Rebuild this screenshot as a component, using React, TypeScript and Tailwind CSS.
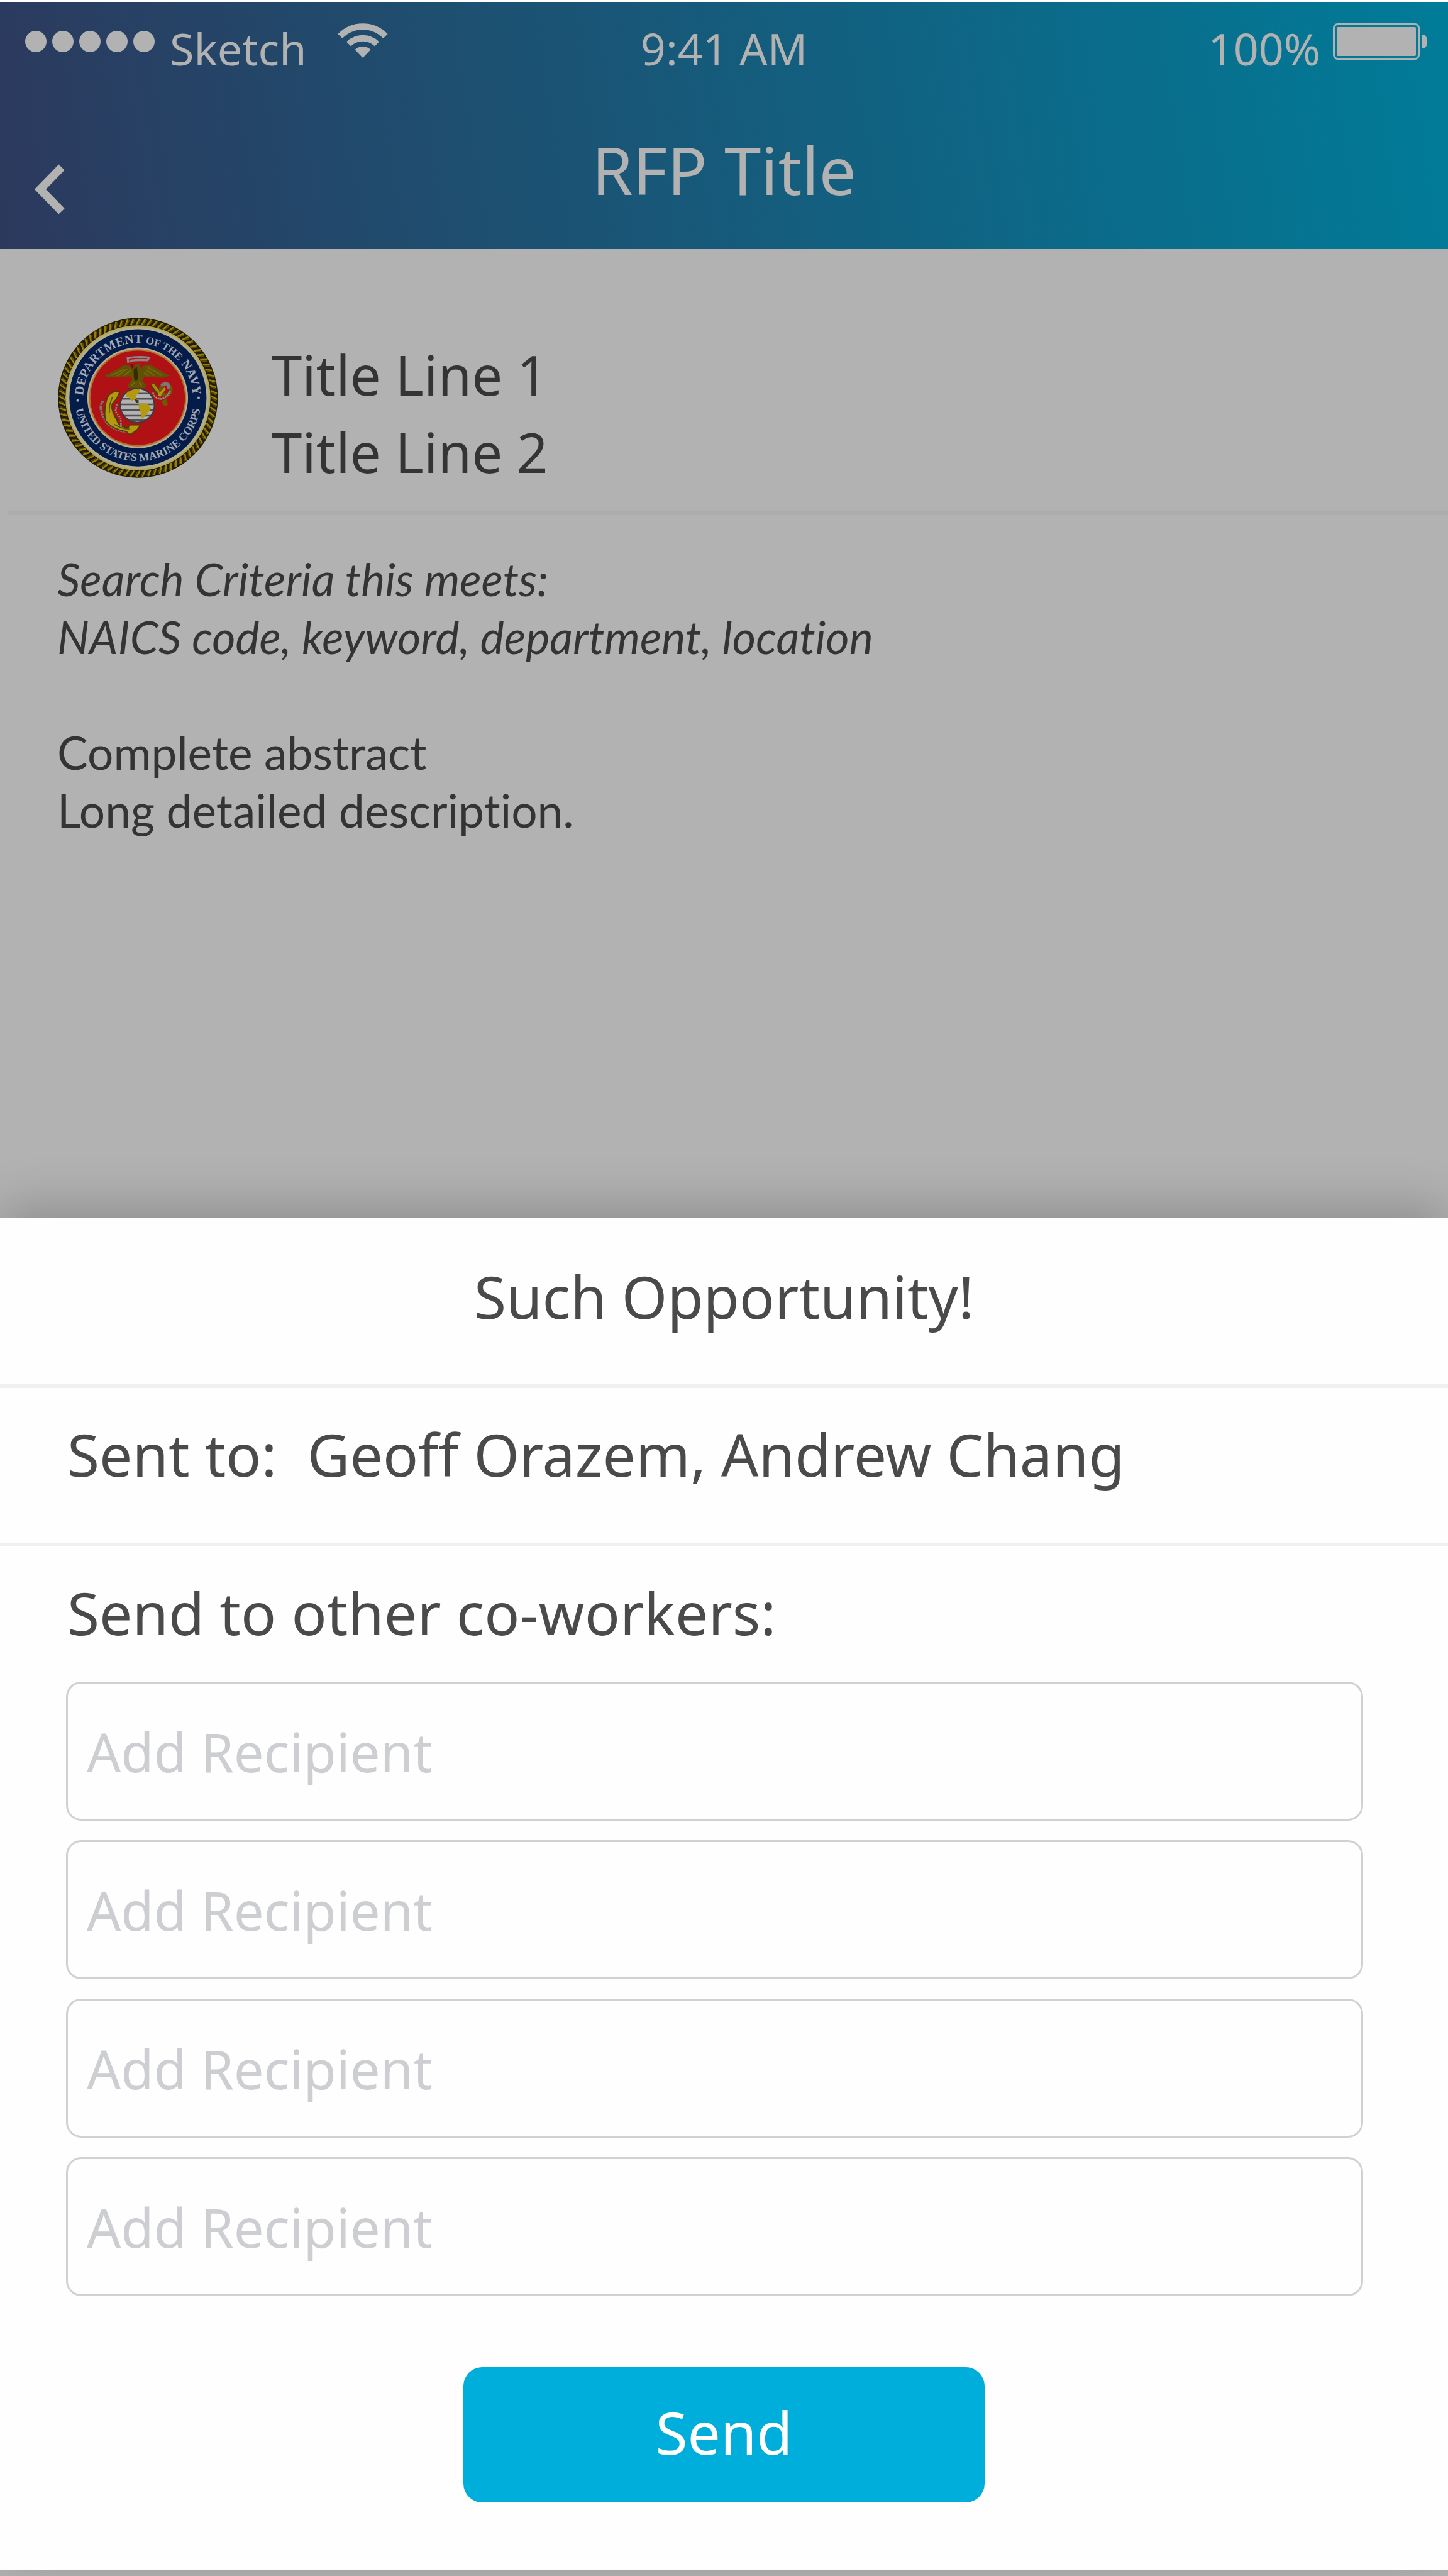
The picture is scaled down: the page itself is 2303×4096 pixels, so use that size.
const NOTO = "font-['Noto_Sans',sans-serif]";
const LATO = "font-['Lato',sans-serif]";

function WifiIcon() {
  return (
    <svg viewBox="0 0 80 56" className="h-[56px] w-[80px]" role="img" aria-label="Wi-Fi">
      <g fill="none" stroke="#b2b2b2" strokeWidth="10">
        <path d="M4 20.500A50 50 0 0 1 76 20.500" />
        <path d="M17.500 33A32 32 0 0 1 62.500 33" />
      </g>
      <path d="M40 55 27.500 42A18 18 0 0 1 52.500 42Z" fill="#b2b2b2" />
    </svg>
  );
}

function BatteryIcon() {
  return (
    <svg viewBox="0 0 151 58" className="h-[58px] w-[151px]" role="img" aria-label="Battery full">
      <rect x="1.500" y="1.500" width="135" height="55" rx="6" fill="none" stroke="#b2b2b2" strokeWidth="3" />
      <rect x="6" y="6" width="126" height="46" rx="2" fill="#b2b2b2" />
      <path d="M141 18h4q5 3 5 11t-5 11h-4z" fill="#b2b2b2" />
    </svg>
  );
}

const STRANDS = Array.from({ length: 84 }, (_, i) => (i * 360) / 84);

function MarineSeal() {
  return (
    <svg
      viewBox="50 65 1143 1155"
      className="h-[257px] w-[255px] shrink-0"
      role="img"
      aria-label="Department of the Navy, United States Marine Corps"
    >
      <defs>
        <path id="seal-top" d="M229 643A392 392 0 0 1 1013 643" />
        <path id="seal-bottom" d="M169 643A452 452 0 0 0 1073 643" />
        <clipPath id="seal-globe">
          <circle cx="617" cy="697" r="118" />
        </clipPath>
      </defs>

      {/* rope border */}
      <circle cx="621" cy="643" r="543" fill="none" stroke="#231d02" strokeWidth="56" />
      {STRANDS.map((angle) => (
        <g key={angle} transform={`rotate(${angle} 621 643)`}>
          <path d="M608 122 632 78" stroke="#98800a" strokeWidth="12" />
          <path d="M622 116 642 84" stroke="#5d4e05" strokeWidth="7" />
        </g>
      ))}

      {/* rings */}
      <circle cx="621" cy="643" r="518" fill="#b3a75e" />
      <circle cx="621" cy="643" r="506" fill="#b4ae8c" />
      <circle cx="621" cy="643" r="490" fill="#041c4a" />
      <circle cx="619" cy="643" r="360" fill="#b4ad8e" />
      <circle cx="619" cy="643" r="348" fill="#b5712f" />
      <circle cx="619" cy="643" r="338" fill="#b01115" />

      {/* legend */}
      <g fill="#a3a8b2" fontFamily="Liberation Serif, serif" fontWeight="700" textAnchor="middle">
        <text fontSize="90">
          <textPath href="#seal-top" startOffset="50%">
            DEPARTMENT <tspan fontSize="74">OF THE</tspan> NAVY
          </textPath>
        </text>
        <text fontSize="79">
          <textPath href="#seal-bottom" startOffset="50%">
            UNITED STATES MARINE CORPS
          </textPath>
        </text>
      </g>
      <circle cx="190" cy="662" r="9" fill="#a3a8b2" />
      <circle cx="1055" cy="642" r="9" fill="#a3a8b2" />

      {/* anchor */}
      <path d="M548 888Q390 870 360 740Q345 700 372 664" fill="none" stroke="#7d7878" strokeWidth="16" strokeDasharray="14 5" />
      <path
        d="M490 600Q430 590 402 640Q376 720 388 800Q420 860 540 884L560 906L600 884Q630 860 636 836L560 836L552 856Q480 850 470 800Q420 720 440 680Q476 650 490 600Z"
        fill="#b3990d"
        stroke="#4a3d06"
        strokeWidth="8"
      />
      <path d="M438 640Q410 700 418 748M452 832Q500 862 560 866" fill="none" stroke="#5d4e05" strokeWidth="8" />
      <path d="M470 690 460 740 498 790 500 850" fill="none" stroke="#8d8585" strokeWidth="12" strokeDasharray="12 6" />
      <path d="M724 545 782 622" stroke="#4a3d06" strokeWidth="36" />
      <path d="M726 545 790 628" stroke="#a48b0c" strokeWidth="20" />
      <circle cx="820" cy="585" r="38" fill="none" stroke="#6b5b08" strokeWidth="22" />
      <path d="M790 556Q806 536 836 546L842 580" fill="none" stroke="#7c7878" strokeWidth="22" />
      <path d="M770 628 816 574" stroke="#b3990d" strokeWidth="16" />
      <path d="M728 606Q744 656 796 650Q836 636 850 590" fill="none" stroke="#918b8b" strokeWidth="12" strokeDasharray="14 4" />
      <path d="M790 664 826 652 836 690 816 704 798 690Z" fill="#6b5b08" />

      {/* globe */}
      <circle cx="617" cy="697" r="126" fill="#444446" />
      <g clipPath="url(#seal-globe)">
        <rect x="490" y="570" width="260" height="260" fill="#b2b2b2" />
        <path
          d="M490 612H750M490 650H750M490 690H750M490 731H750M490 771H750M490 803H750"
          stroke="#505052"
          strokeWidth="11"
        />
        <path d="M640 570 750 590V640L700 612Z" fill="#8b8b8d" />
        <path d="M536 590 560 566 636 580 628 606 612 622 606 650 578 664 560 644 536 636Z" fill="#b3990d" />
        <path d="M626 684H690L714 722 686 758 660 784 642 792V750L628 720Z" fill="#b3990d" />
        <path d="M596 652 628 662 624 682 606 674Z" fill="#3c3820" />
      </g>
      <circle cx="617" cy="697" r="122" fill="none" stroke="#3c3c3e" strokeWidth="9" />

      {/* eagle */}
      <path
        d="M382 480 440 458 520 408 560 414 584 436 610 396 634 402 640 436 662 412 704 404 768 440 850 486 790 500 668 492 650 520 680 552 672 574 552 572 552 546 582 512 568 490 460 498 396 494Z"
        fill="#5f5105"
      />
      <path
        d="M430 482 520 440M470 488 544 436M520 486 572 444M690 424 790 482M676 442 740 484M664 464 700 486M570 560 600 530M650 560 630 530"
        fill="none"
        stroke="#7c6908"
        strokeWidth="9"
      />
      <path d="M590 440 614 420 622 500 608 530 592 500Z" fill="#352c03" />
      <path d="M584 430 574 400" stroke="#5e1518" strokeWidth="12" />
      <path d="M552 392 548 360Q620 344 700 356L690 374Q620 370 564 378" fill="none" stroke="#8f8585" strokeWidth="15" />
    </svg>
  );
}

function StatusBar() {
  return (
    <div className="grid grid-cols-[1fr_auto_1fr] items-start px-[32px] pt-[34px] text-[70px] leading-[80px]">
      <div className="flex items-start pl-[8px]">
        <div className="flex h-[58px] items-center gap-[9px]" role="img" aria-label="Signal strength: 5 of 5">
          {[1, 2, 3, 4, 5].map((dot) => (
            <span key={dot} className="size-[34px] rounded-full bg-[#b2b2b2]" />
          ))}
        </div>
        <span className="pr-[50px] pl-[24px]">Sketch</span>
        <WifiIcon />
      </div>
      <span>9:41 AM</span>
      <div className="flex items-start justify-end gap-[20px]">
        <span>100%</span>
        <BatteryIcon />
      </div>
    </div>
  );
}

function RecipientInput({ index }: { index: number }) {
  return (
    <input
      type="text"
      aria-label={`Recipient ${index}`}
      placeholder="Add Recipient"
      className="block h-[221px] w-full rounded-[24px] border-[3px] border-[#d0d1d5] bg-transparent px-[30px] text-[85px] leading-[160px] text-[#4a4a4a] outline-none placeholder:text-[#cdced2] placeholder:opacity-100"
    />
  );
}

export default function App() {
  return (
    <div className={`flex min-h-screen flex-col overflow-hidden bg-[#b2b2b2] ${NOTO}`}>
      <header className="border-t-[3px] border-white bg-[linear-gradient(81deg,#2c395d,#007c99)] pb-[55px] text-[#b2b2b2]">
        <StatusBar />
        <div className="mt-[93px] grid grid-cols-[1fr_auto_1fr]">
          <button type="button" aria-label="Back" className="mt-[51px] ml-[54px] w-[52px]">
            <svg viewBox="0 0 52 80" className="h-[80px] w-[52px]" aria-hidden="true">
              <path d="M44 5 10 40 44 75" fill="none" stroke="#b2b2b2" strokeWidth="13" />
            </svg>
          </button>
          <h1 className="text-[105px] leading-[120px]">RFP Title</h1>
        </div>
      </header>

      <main className="flex-1 text-[#343434]">
        <section className="flex items-start gap-[85px] px-[92px] pt-[108px] pb-[32px]">
          <MarineSeal />
          <h2 className="pt-[30px] text-[87px] leading-[123px]">
            Title Line 1
            <br />
            Title Line 2
          </h2>
        </section>
        <hr className="ml-[13px] h-[7px] border-0 bg-[#acacac]" />
        <section
          className={`px-[91px] pt-[55px] leading-[92px] [font-variant-ligatures:no-common-ligatures] ${LATO}`}
        >
          <p className="text-[72px] italic">
            Search Criteria this meets:
            <br />
            NAICS code, keyword, department, location
          </p>
          <p className="mt-[92px] text-[73px]">
            Complete abstract
            <br />
            Long detailed description.
          </p>
        </section>
      </main>

      <section
        role="dialog"
        aria-labelledby="sheet-title"
        className="mb-[10px] bg-[#fefefe] text-[93px] leading-[120px] text-[#4a4a4a] shadow-[0_-19px_74px_rgba(0,0,0,0.2)]"
      >
        <h2 id="sheet-title" className="border-b-[6px] border-[#f0f0f0] pt-[64px] pb-[80px] text-center">
          Such Opportunity!
        </h2>
        <p className="border-b-[6px] border-[#f0f0f0] px-[107px] pt-[45px] pb-[81px] whitespace-pre-wrap">
          {"Sent to:  Geoff Orazem, Andrew Chang"}
        </p>
        <form className="pt-[45px] pb-[107px]" onSubmit={(event) => event.preventDefault()}>
          <fieldset className="pr-[135px] pl-[105px]">
            <legend className="px-[2px]">Send to other co-workers:</legend>
            <div className="flex flex-col gap-[31px] pt-[50px]">
              {[1, 2, 3, 4].map((index) => (
                <RecipientInput key={index} index={index} />
              ))}
            </div>
          </fieldset>
          <button
            type="submit"
            className="mx-auto mt-[113px] block h-[215px] w-[36%] rounded-[30px] bg-[#00aedb] pb-[10px] text-white"
          >
            Send
          </button>
        </form>
      </section>
    </div>
  );
}
